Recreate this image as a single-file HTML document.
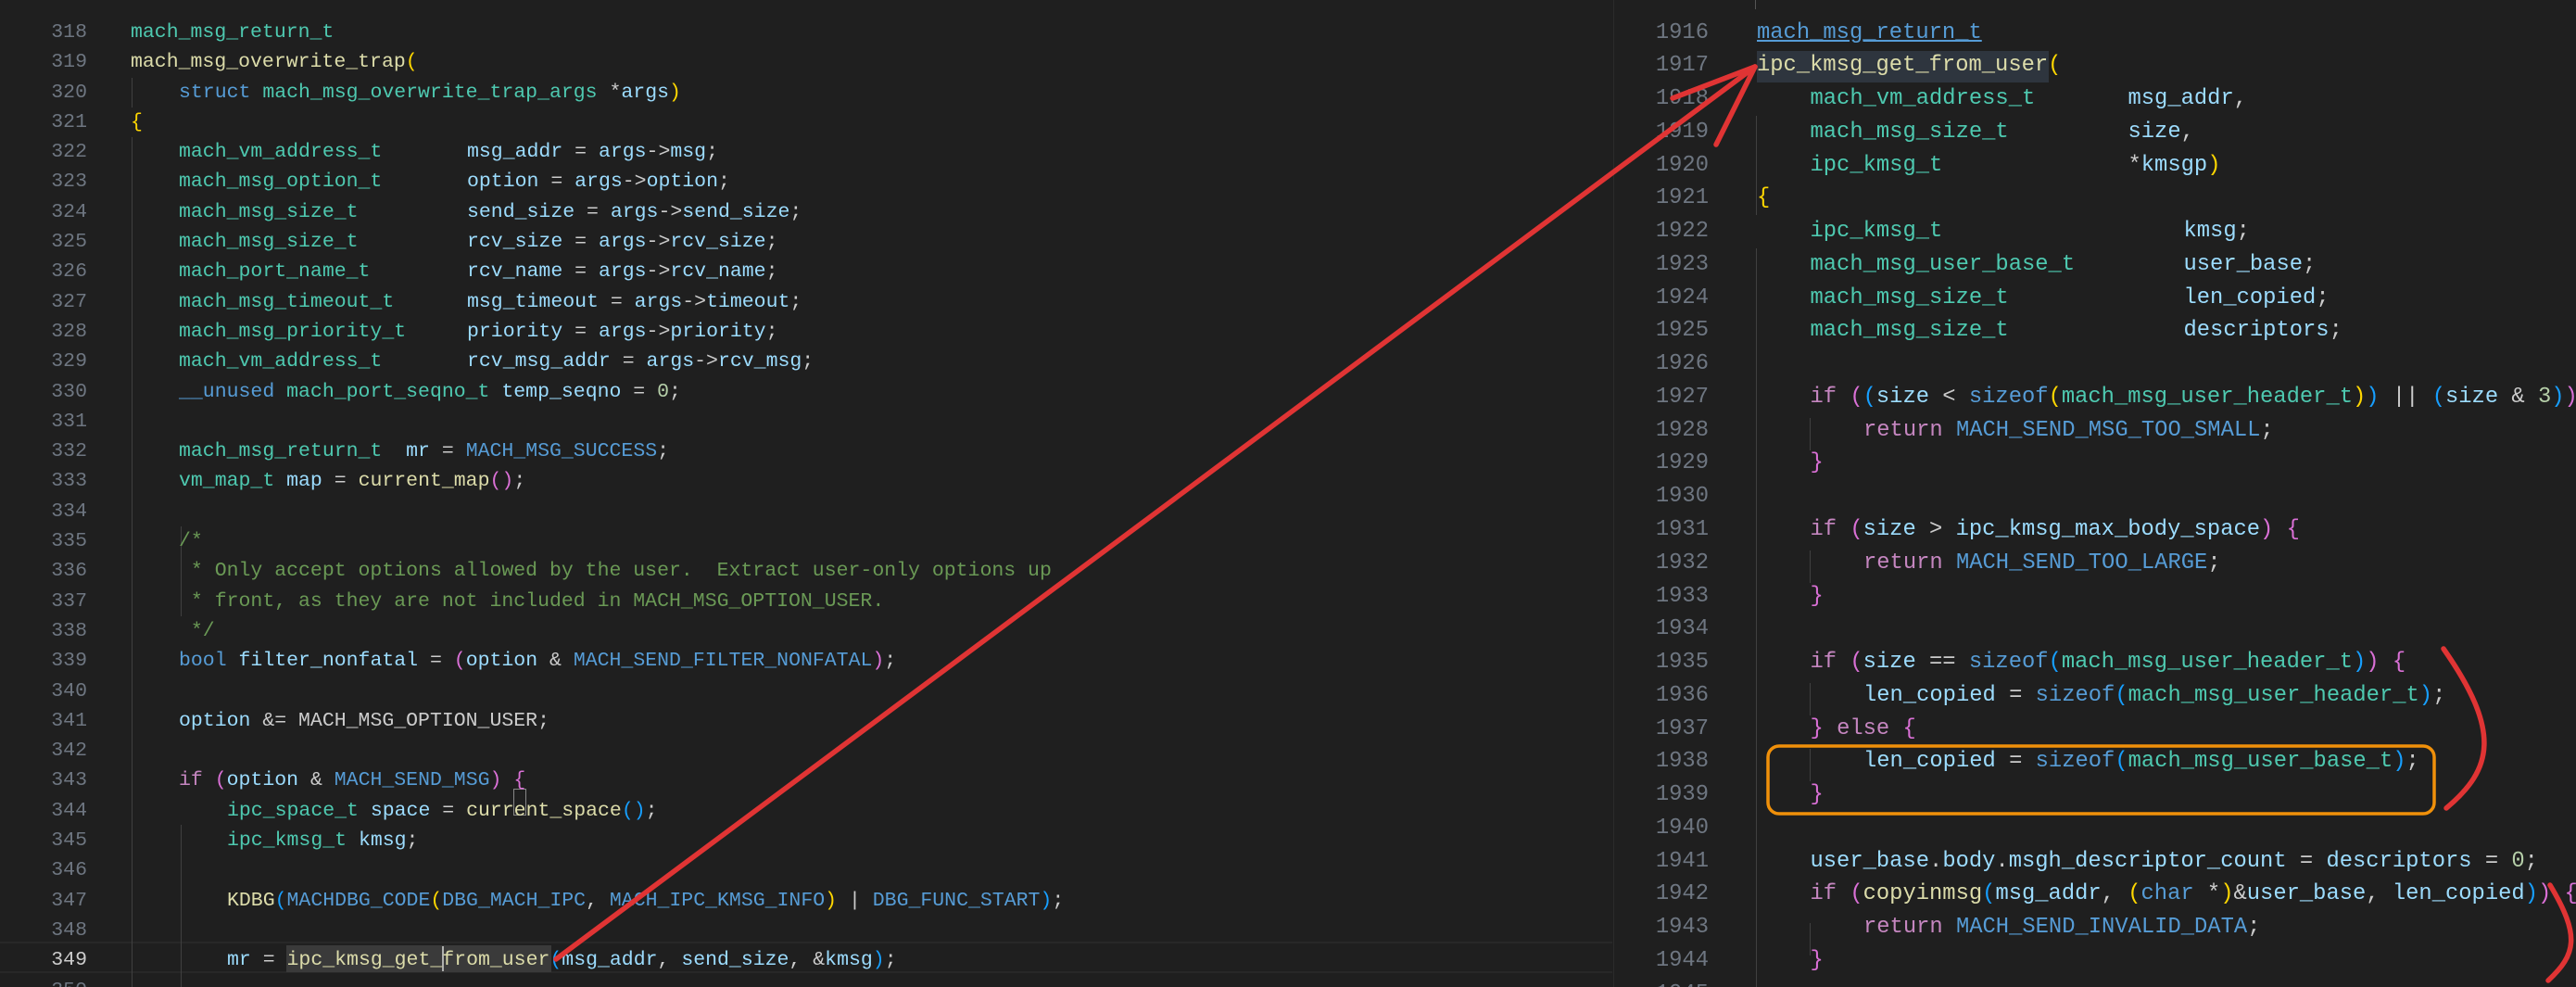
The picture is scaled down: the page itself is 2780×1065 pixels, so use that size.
<!DOCTYPE html>
<html><head><meta charset="utf-8"><style>
html,body{margin:0;padding:0;background:#1f1f1f;width:2780px;height:1065px;overflow:hidden;position:relative}
.col{position:absolute;font-family:"Liberation Mono",monospace;white-space:pre;color:#cccccc}
.ln{color:#6e7681;text-align:right}
.L{line-height:32.3px;top:19px;font-size:21.5px}
.R{line-height:35.77px;top:17.5px;font-size:23.8px}
.t{color:#4ec9b0}.v{color:#9cdcfe}.f{color:#dcdcaa}.k{color:#569cd6}.c{color:#c586c0}.m{color:#4fc1ff}.cm{color:#6a9955}.n{color:#b5cea8}
.y{color:#ffd700}.p{color:#da70d6}.b{color:#179fff}
.i{display:inline-block;width:52px}.ir{display:inline-block;width:57.5px}
.w{display:inline-block}
.g{position:absolute;width:1px;background:#404040}
</style></head><body>
<div style="position:absolute;left:0;top:1016px;width:1740px;height:34px;border-top:2px solid #282828;border-bottom:2px solid #282828;box-sizing:border-box"></div>
<div style="position:absolute;left:1741px;top:0;width:1px;height:1065px;background:#2b2b2b"></div>
<div style="position:absolute;left:1894px;top:0;width:1px;height:10px;background:#555"></div>
<div style="position:absolute;left:309px;top:1020px;width:286px;height:29px;background:#3a3a3a"></div>
<div style="position:absolute;left:477px;top:1021px;width:2px;height:27px;background:#aeafad"></div>
<div style="position:absolute;left:1896px;top:55px;width:315px;height:34px;background:#2e353e"></div>
<div style="position:absolute;left:554px;top:851px;width:14px;height:29px;border:1px solid #888;box-sizing:border-box"></div>
<div class="g" style="left:142px;top:84px;height:32px"></div>
<div class="g" style="left:142px;top:148px;height:917px"></div>
<div class="g" style="left:195px;top:568px;height:97px"></div>
<div class="g" style="left:195px;top:890px;height:175px"></div>
<div class="g" style="left:1895px;top:125px;height:107px"></div>
<div class="g" style="left:1895px;top:268px;height:797px"></div>
<div class="g" style="left:1953px;top:451px;height:35px"></div>
<div class="g" style="left:1953px;top:594px;height:35px"></div>
<div class="g" style="left:1953px;top:737px;height:35px"></div>
<div class="g" style="left:1953px;top:808px;height:35px"></div>
<div class="g" style="left:1953px;top:996px;height:35px"></div>

<div class="col ln L" style="left:20px;width:74px">318
319
320
321
322
323
324
325
326
327
328
329
330
331
332
333
334
335
336
337
338
339
340
341
342
343
344
345
346
347
348
<span style="color:#cccccc">349</span>
350</div>
<div class="col L" style="left:141px"><span class="t">mach_msg_return_t</span>
<span class="f">mach_msg_overwrite_trap</span><span class="y">(</span>
<span class="i"></span><span class="k">struct</span> <span class="t">mach_msg_overwrite_trap_args</span> *<span class="v">args</span><span class="y">)</span>
<span class="y">{</span>
<span class="i"></span><span class="w t" style="width:311px">mach_vm_address_t</span><span class="v">msg_addr</span> = <span class="v">args</span>-&gt;<span class="v">msg</span>;
<span class="i"></span><span class="w t" style="width:311px">mach_msg_option_t</span><span class="v">option</span> = <span class="v">args</span>-&gt;<span class="v">option</span>;
<span class="i"></span><span class="w t" style="width:311px">mach_msg_size_t</span><span class="v">send_size</span> = <span class="v">args</span>-&gt;<span class="v">send_size</span>;
<span class="i"></span><span class="w t" style="width:311px">mach_msg_size_t</span><span class="v">rcv_size</span> = <span class="v">args</span>-&gt;<span class="v">rcv_size</span>;
<span class="i"></span><span class="w t" style="width:311px">mach_port_name_t</span><span class="v">rcv_name</span> = <span class="v">args</span>-&gt;<span class="v">rcv_name</span>;
<span class="i"></span><span class="w t" style="width:311px">mach_msg_timeout_t</span><span class="v">msg_timeout</span> = <span class="v">args</span>-&gt;<span class="v">timeout</span>;
<span class="i"></span><span class="w t" style="width:311px">mach_msg_priority_t</span><span class="v">priority</span> = <span class="v">args</span>-&gt;<span class="v">priority</span>;
<span class="i"></span><span class="w t" style="width:311px">mach_vm_address_t</span><span class="v">rcv_msg_addr</span> = <span class="v">args</span>-&gt;<span class="v">rcv_msg</span>;
<span class="i"></span><span class="k">__unused</span> <span class="t">mach_port_seqno_t</span> <span class="v">temp_seqno</span> = <span class="n">0</span>;

<span class="i"></span><span class="t">mach_msg_return_t</span>  <span class="v">mr</span> = <span class="k">MACH_MSG_SUCCESS</span>;
<span class="i"></span><span class="t">vm_map_t</span> <span class="v">map</span> = <span class="f">current_map</span><span class="p">()</span>;

<span class="i"></span><span class="cm">/*</span>
<span class="i"></span><span class="cm"> * Only accept options allowed by the user.  Extract user-only options up</span>
<span class="i"></span><span class="cm"> * front, as they are not included in MACH_MSG_OPTION_USER.</span>
<span class="i"></span><span class="cm"> */</span>
<span class="i"></span><span class="k">bool</span> <span class="v">filter_nonfatal</span> = <span class="p">(</span><span class="v">option</span> &amp; <span class="k">MACH_SEND_FILTER_NONFATAL</span><span class="p">)</span>;

<span class="i"></span><span class="v">option</span> &amp;= MACH_MSG_OPTION_USER;

<span class="i"></span><span class="c">if</span> <span class="p">(</span><span class="v">option</span> &amp; <span class="k">MACH_SEND_MSG</span><span class="p">)</span> <span class="p">{</span>
<span class="i"></span><span class="i"></span><span class="t">ipc_space_t</span> <span class="v">space</span> = <span class="f">current_space</span><span class="b">()</span>;
<span class="i"></span><span class="i"></span><span class="t">ipc_kmsg_t</span> <span class="v">kmsg</span>;

<span class="i"></span><span class="i"></span><span class="f">KDBG</span><span class="b">(</span><span class="k">MACHDBG_CODE</span><span class="y">(</span><span class="k">DBG_MACH_IPC</span>, <span class="k">MACH_IPC_KMSG_INFO</span><span class="y">)</span> | <span class="k">DBG_FUNC_START</span><span class="b">)</span>;

<span class="i"></span><span class="i"></span><span class="v">mr</span> = <span class="f">ipc_kmsg_get_from_user</span><span class="b">(</span><span class="v">msg_addr</span>, <span class="v">send_size</span>, &amp;<span class="v">kmsg</span><span class="b">)</span>;
</div>

<div class="col ln R" style="left:1760px;width:84px">1916
1917
1918
1919
1920
1921
1922
1923
1924
1925
1926
1927
1928
1929
1930
1931
1932
1933
1934
1935
1936
1937
1938
1939
1940
1941
1942
1943
1944
1945</div>
<div class="col R" style="left:1896px"><span class="k" style="text-decoration:underline">mach_msg_return_t</span>
<span class="f">ipc_kmsg_get_from_user</span><span class="y">(</span>
<span class="ir"></span><span class="w t" style="width:343px">mach_vm_address_t</span><span class="v">msg_addr</span>,
<span class="ir"></span><span class="w t" style="width:343px">mach_msg_size_t</span><span class="v">size</span>,
<span class="ir"></span><span class="w t" style="width:343px">ipc_kmsg_t</span>*<span class="v">kmsgp</span><span class="y">)</span>
<span class="y">{</span>
<span class="ir"></span><span class="w t" style="width:403px">ipc_kmsg_t</span><span class="v">kmsg</span>;
<span class="ir"></span><span class="w t" style="width:403px">mach_msg_user_base_t</span><span class="v">user_base</span>;
<span class="ir"></span><span class="w t" style="width:403px">mach_msg_size_t</span><span class="v">len_copied</span>;
<span class="ir"></span><span class="w t" style="width:403px">mach_msg_size_t</span><span class="v">descriptors</span>;

<span class="ir"></span><span class="c">if</span> <span class="p">(</span><span class="b">(</span><span class="v">size</span> &lt; <span class="k">sizeof</span><span class="y">(</span><span class="t">mach_msg_user_header_t</span><span class="y">)</span><span class="b">)</span> || <span class="b">(</span><span class="v">size</span> &amp; <span class="n">3</span><span class="b">)</span><span class="p">)</span>
<span class="ir"></span><span class="ir"></span><span class="c">return</span> <span class="k">MACH_SEND_MSG_TOO_SMALL</span>;
<span class="ir"></span><span class="p">}</span>

<span class="ir"></span><span class="c">if</span> <span class="p">(</span><span class="v">size</span> &gt; <span class="v">ipc_kmsg_max_body_space</span><span class="p">)</span> <span class="p">{</span>
<span class="ir"></span><span class="ir"></span><span class="c">return</span> <span class="k">MACH_SEND_TOO_LARGE</span>;
<span class="ir"></span><span class="p">}</span>

<span class="ir"></span><span class="c">if</span> <span class="p">(</span><span class="v">size</span> == <span class="k">sizeof</span><span class="b">(</span><span class="t">mach_msg_user_header_t</span><span class="b">)</span><span class="p">)</span> <span class="p">{</span>
<span class="ir"></span><span class="ir"></span><span class="v">len_copied</span> = <span class="k">sizeof</span><span class="b">(</span><span class="t">mach_msg_user_header_t</span><span class="b">)</span>;
<span class="ir"></span><span class="p">}</span> <span class="c">else</span> <span class="p">{</span>
<span class="ir"></span><span class="ir"></span><span class="v">len_copied</span> = <span class="k">sizeof</span><span class="b">(</span><span class="t">mach_msg_user_base_t</span><span class="b">)</span>;
<span class="ir"></span><span class="p">}</span>

<span class="ir"></span><span class="v">user_base</span>.<span class="v">body</span>.<span class="v">msgh_descriptor_count</span> = <span class="v">descriptors</span> = <span class="n">0</span>;
<span class="ir"></span><span class="c">if</span> <span class="p">(</span><span class="f">copyinmsg</span><span class="b">(</span><span class="v">msg_addr</span>, <span class="y">(</span><span class="k">char</span> *<span class="y">)</span>&amp;<span class="v">user_base</span>, <span class="v">len_copied</span><span class="b">)</span><span class="p">)</span> <span class="p">{</span>
<span class="ir"></span><span class="ir"></span><span class="c">return</span> <span class="k">MACH_SEND_INVALID_DATA</span>;
<span class="ir"></span><span class="p">}</span>
</div>

<svg style="position:absolute;left:0;top:0" width="2780" height="1065">
<rect x="1908" y="805" width="719" height="73" rx="12" fill="none" stroke="#f0900a" stroke-width="3.5"/>
<g stroke="#e03434" stroke-width="5.5" fill="none" stroke-linecap="round">
<line x1="600" y1="1035" x2="1894" y2="72"/>
<line x1="1894" y1="72" x2="1805" y2="106"/>
<line x1="1894" y1="72" x2="1852" y2="156"/>
<path d="M2637 700 C2700 790 2690 830 2640 872"/>
<path d="M2752 955 C2785 1010 2780 1030 2750 1058"/>
</g>
</svg>
</body></html>
